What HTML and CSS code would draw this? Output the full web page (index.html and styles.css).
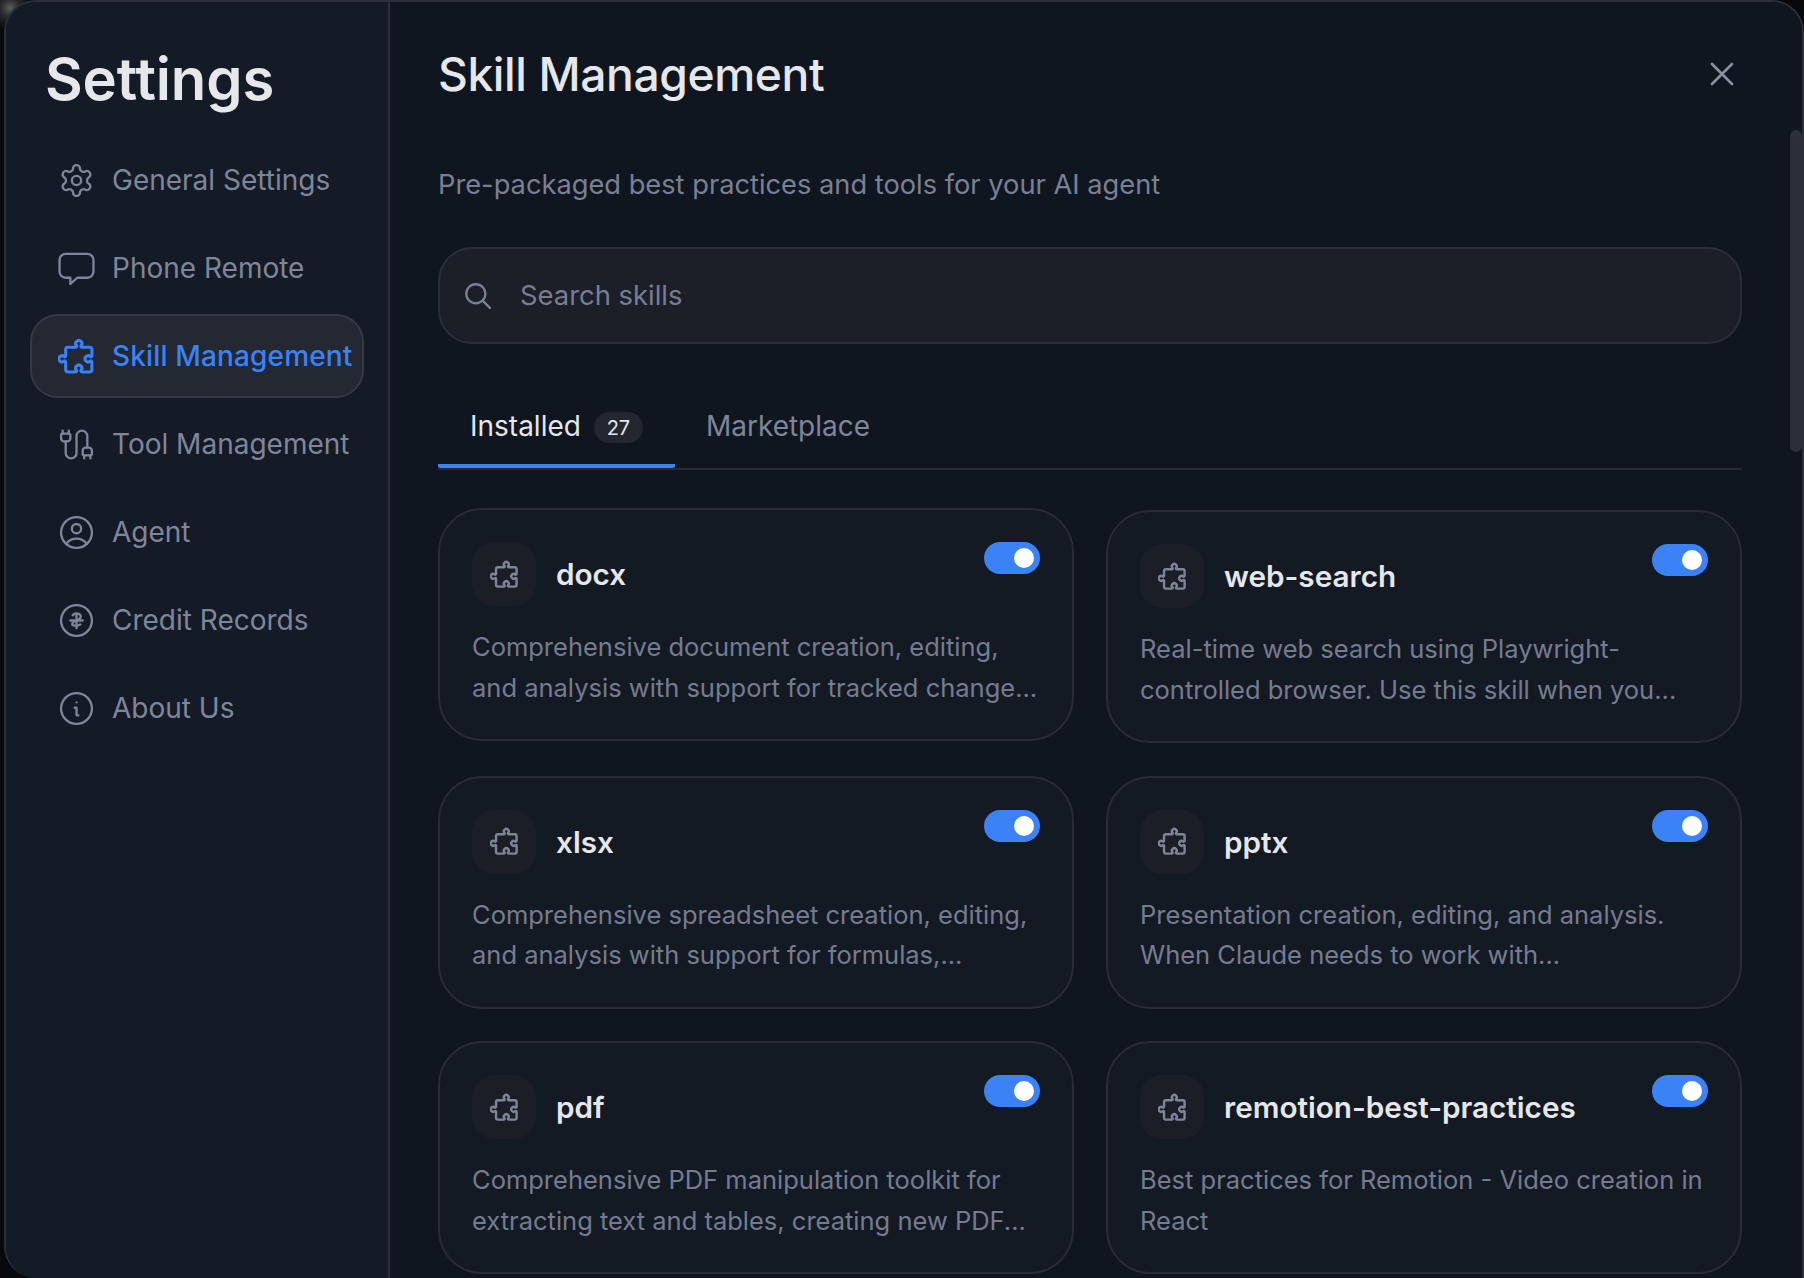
FILE: index.html
```html
<!DOCTYPE html>
<html lang="en">
<head>
<meta charset="utf-8">
<title>Settings</title>
<link rel="stylesheet" href="styles.css">
</head>
<body>
<svg class="defs" width="0" height="0" aria-hidden="true">
  <symbol id="puzzle" viewBox="0 0 24 24"><path d="M6.5 6H11.4a.7.7 0 0 0 .6-1.1a2 2 0 1 1 3 0a.7.7 0 0 0 .6 1.1H20.5a1.5 1.5 0 0 1 1.5 1.5V11.4a.7.7 0 0 1-1.1.6a2 2 0 1 0 0 3a.7.7 0 0 1 1.1.6V20.5a1.5 1.5 0 0 1-1.5 1.5H15.6a.7.7 0 0 1-.6-1.1a2 2 0 1 0-3 0a.7.7 0 0 1-.6 1.1H6.5a1.5 1.5 0 0 1-1.5-1.5V15.6a.7.7 0 0 0-1.1-.6a2 2 0 1 1 0-3a.7.7 0 0 0 1.1-.6V7.5A1.5 1.5 0 0 1 6.5 6z"/></symbol>
</svg>
<div class="window">
  <aside class="sidebar">
    <h1 class="sidebar-title">Settings</h1>
    <nav class="nav">
      <a class="nav-item"><svg class="nav-icon" viewBox="0 0 24 24"><path d="M12.22 2h-.44a2 2 0 0 0-2 2v.18a2 2 0 0 1-1 1.73l-.43.25a2 2 0 0 1-2 0l-.15-.08a2 2 0 0 0-2.73.73l-.22.38a2 2 0 0 0 .73 2.73l.15.1a2 2 0 0 1 1 1.72v.51a2 2 0 0 1-1 1.74l-.15.09a2 2 0 0 0-.73 2.73l.22.38a2 2 0 0 0 2.73.73l.15-.08a2 2 0 0 1 2 0l.43.25a2 2 0 0 1 1 1.73V20a2 2 0 0 0 2 2h.44a2 2 0 0 0 2-2v-.18a2 2 0 0 1 1-1.73l.43-.25a2 2 0 0 1 2 0l.15.08a2 2 0 0 0 2.73-.73l.22-.39a2 2 0 0 0-.73-2.73l-.15-.08a2 2 0 0 1-1-1.74v-.5a2 2 0 0 1 1-1.74l.15-.09a2 2 0 0 0 .73-2.73l-.22-.38a2 2 0 0 0-2.73-.73l-.15.08a2 2 0 0 1-2 0l-.43-.25a2 2 0 0 1-1-1.73V4a2 2 0 0 0-2-2z"/><circle cx="12" cy="12" r="3"/></svg><span>General Settings</span></a>
      <a class="nav-item"><svg class="nav-icon" viewBox="0 0 24 24"><path d="M5 2.500h14a4 4 0 0 1 4 4v7.500a4 4 0 0 1-4 4h-6.500l-4.500 4v-4H5a4 4 0 0 1-4-4V6.500a4 4 0 0 1 4-4z"/></svg><span>Phone Remote</span></a>
      <a class="nav-item active"><svg class="nav-icon"><use href="#puzzle"/></svg><span>Skill Management</span></a>
      <a class="nav-item"><svg class="nav-icon" viewBox="0 0 24 24"><path d="M17 19a1 1 0 0 1-1-1v-2a2 2 0 0 1 2-2h2a2 2 0 0 1 2 2v2a1 1 0 0 1-1 1z"/><path d="M17 21v-2"/><path d="M19 14V6.500a1 1 0 0 0-7 0v11a1 1 0 0 1-7 0V10"/><path d="M21 21v-2"/><path d="M3 5V3"/><path d="M4 10a2 2 0 0 1-2-2V6a1 1 0 0 1 1-1h4a1 1 0 0 1 1 1v2a2 2 0 0 1-2 2z"/><path d="M7 5V3"/></svg><span>Tool Management</span></a>
      <a class="nav-item"><svg class="nav-icon" viewBox="0 0 24 24"><circle cx="12" cy="12" r="10"/><circle cx="12" cy="9.500" r="3"/><path d="M5.300 19.400C6.800 17.200 9 16 12 16s5.200 1.200 6.700 3.400"/></svg><span>Agent</span></a>
      <a class="nav-item"><svg class="nav-icon" viewBox="0 0 24 24"><circle cx="12" cy="12" r="10"/><path d="M9.500 8.600c1-1.500 5-1.700 5.300.7.300 2.300-4.800 2.600-5.600 4.700-.5 1.500 3 1.700 5.300.6"/><path d="M8 12h8"/><path d="M12 7.500v9.500"/></svg><span>Credit Records</span></a>
      <a class="nav-item"><svg class="nav-icon" viewBox="0 0 24 24"><circle cx="12" cy="12" r="10"/><path d="M12 8h.01"/><path d="M10.800 11.500H12v4.200c0 .6.500 1 1.200.7"/></svg><span>About Us</span></a>
    </nav>
  </aside>
  <main class="main">
    <header class="main-head">
      <h2 class="main-title">Skill Management</h2>
      <svg class="close" viewBox="0 0 24 24"><path d="M2 2l20 20M22 2L2 22"/></svg>
    </header>
    <p class="subtitle">Pre-packaged best practices and tools for your AI agent</p>
    <div class="search">
      <svg class="search-icon" viewBox="0 0 24 24"><circle cx="10.500" cy="10.500" r="8.500"/><path d="M17 17l6 6"/></svg>
      <span class="search-text">Search skills</span>
    </div>
    <div class="tabs">
      <div class="tab current"><span>Installed</span><span class="badge">27</span></div>
      <div class="tab"><span>Marketplace</span></div>
    </div>
    <section class="grid">
      <article class="card">
        <div class="card-head"><div class="card-id"><div class="card-icon"><svg class="puzzle-sm"><use href="#puzzle"/></svg></div><h3>docx</h3></div><span class="toggle"></span></div>
        <p class="desc">Comprehensive document creation, editing, and analysis with support for tracked change...</p>
      </article>
      <article class="card shifted">
        <div class="card-head"><div class="card-id"><div class="card-icon"><svg class="puzzle-sm"><use href="#puzzle"/></svg></div><h3>web-search</h3></div><span class="toggle"></span></div>
        <p class="desc">Real-time web search using Playwright-controlled browser. Use this skill when you...</p>
      </article>
      <article class="card">
        <div class="card-head"><div class="card-id"><div class="card-icon"><svg class="puzzle-sm"><use href="#puzzle"/></svg></div><h3>xlsx</h3></div><span class="toggle"></span></div>
        <p class="desc">Comprehensive spreadsheet creation, editing, and analysis with support for formulas,...</p>
      </article>
      <article class="card">
        <div class="card-head"><div class="card-id"><div class="card-icon"><svg class="puzzle-sm"><use href="#puzzle"/></svg></div><h3>pptx</h3></div><span class="toggle"></span></div>
        <p class="desc">Presentation creation, editing, and analysis. When Claude needs to work with...</p>
      </article>
      <article class="card">
        <div class="card-head"><div class="card-id"><div class="card-icon"><svg class="puzzle-sm"><use href="#puzzle"/></svg></div><h3>pdf</h3></div><span class="toggle"></span></div>
        <p class="desc">Comprehensive PDF manipulation toolkit for extracting text and tables, creating new PDF...</p>
      </article>
      <article class="card">
        <div class="card-head"><div class="card-id"><div class="card-icon"><svg class="puzzle-sm"><use href="#puzzle"/></svg></div><h3>remotion-best-practices</h3></div><span class="toggle"></span></div>
        <p class="desc">Best practices for Remotion - Video creation in React</p>
      </article>
    </section>
    <div class="scrollbar"></div>
  </main>
</div>
</body>
</html>
```
FILE: styles.css
```css
* { box-sizing: border-box; }
html, body { height: 100%; }
body {
  margin: 0;
  background: radial-gradient(circle at 10px 8px, #5a5c60 0, #2a2b2e 9px, #08090c 22px);
  overflow: hidden;
  font-family: Inter, "Liberation Sans", sans-serif;
  color: #e5e7eb;
}
.defs { position: absolute; }
.window {
  height: 1278px;
  margin-left: 4px;
  display: flex;
  border: 2px solid #2a2f3a;
  border-bottom: 0;
  border-radius: 32px 32px 0 32px;
  overflow: hidden;
  background: #10161f;
}
.sidebar {
  width: 384px;
  flex: none;
  background: #151b26;
  border-right: 2px solid #2a2f3a;
  padding: 43px 24px 0 24px;
}
.sidebar-title {
  margin: 0 0 0 15px;
  font-size: 58px;
  line-height: 68px;
  font-weight: 600;
  letter-spacing: -0.1px;
  color: #e5e7eb;
}
.nav { margin-top: 25px; display: flex; flex-direction: column; gap: 4px; }
.nav-item {
  height: 84px;
  display: flex;
  align-items: center;
  gap: 17px;
  padding-left: 26px;
  border: 2px solid transparent;
  border-radius: 28px;
  font-size: 28px;
  font-weight: 400;
  color: #7f869a;
  white-space: nowrap;
}
.nav-item.active {
  color: #3b82f6;
  background: #232833;
  border-color: #343944;
  font-weight: 500;
  letter-spacing: 0.15px;
}
.nav-icon {
  width: 37px;
  height: 37px;
  flex: none;
  fill: none;
  stroke: currentColor;
  stroke-width: 1.5;
  stroke-linecap: round;
  stroke-linejoin: round;
}
.active .nav-icon { stroke-width: 2; }
.main {
  position: relative;
  flex: 1;
  min-width: 0;
  padding: 0 60px 0 48px;
  background: #10161f;
}
.main-head {
  display: flex;
  align-items: flex-start;
  justify-content: space-between;
  height: 163px;
  padding: 44px 8px 0 0;
}
.main-title {
  margin: 0;
  font-size: 46.2px;
  line-height: 56px;
  font-weight: 500;
  letter-spacing: -0.4px;
  color: #e5e7eb;
}
.close {
  width: 24px;
  height: 24px;
  margin-top: 16px;
  fill: none;
  stroke: #8b90a0;
  stroke-width: 2.6;
  stroke-linecap: round;
}
.subtitle {
  margin: 0;
  font-size: 27.25px;
  line-height: 40px;
  color: #7a8094;
}
.search {
  margin-top: 42px;
  height: 97px;
  display: flex;
  align-items: center;
  gap: 29px;
  padding-left: 24px;
  padding-bottom: 1px;
  background: #1c1f28;
  border: 2px solid #2a2e39;
  border-radius: 34px;
}
.search-icon {
  width: 27px;
  height: 27px;
  fill: none;
  stroke: #7b8297;
  stroke-width: 2;
  stroke-linecap: round;
}
.search-text { font-size: 27.4px; color: #787e92; }
.tabs {
  margin-top: 53px;
  height: 73px;
  display: flex;
  border-bottom: 2px solid #262a34;
}
.tab {
  height: 73px;
  padding: 0 32px;
  display: flex;
  align-items: flex-start;
  gap: 13px;
  font-size: 28px;
  line-height: 58px;
  color: #7f869a;
}
.tab + .tab { padding-left: 31px; }
.tab.current {
  color: #e5e7eb;
  border-bottom: 4px solid #3b82f6;
  border-radius: 2px;
  height: 71px;
}
.badge {
  margin-top: 15px;
  height: 31px;
  min-width: 49px;
  border-radius: 16px;
  background: #23272f;
  font-size: 20px;
  line-height: 33px;
  text-align: center;
  color: #e5e7eb;
}
.grid {
  margin-top: 38px;
  display: grid;
  grid-template-columns: 636px 636px;
  grid-template-rows: 234px 232px 232px;
  column-gap: 32px;
  row-gap: 33.5px;
  align-items: start;
}
.card {
  height: 233px;
  padding: 32px;
  background: #141a24;
  border: 2px solid #282c37;
  border-radius: 44px;
}
.card.shifted { margin-top: 2px; }
.card-head { display: flex; justify-content: space-between; align-items: flex-start; }
.card-id { display: flex; align-items: center; gap: 20px; }
.card-icon {
  width: 64px;
  height: 64px;
  border-radius: 22px;
  background: #1c1e27;
  display: flex;
  align-items: center;
  justify-content: center;
  color: #7f8599;
}
.puzzle-sm {
  width: 29px;
  height: 29px;
  fill: none;
  stroke: currentColor;
  stroke-width: 2;
  stroke-linejoin: round;
}
.card h3 {
  margin: 0;
  font-size: 29.7px;
  font-weight: 600;
  color: #e5e7eb;
}
.toggle {
  position: relative;
  width: 56px;
  height: 32px;
  flex: none;
  border-radius: 16px;
  background: #3b82f6;
}
.toggle::after {
  content: "";
  position: absolute;
  right: 6px;
  top: 6px;
  width: 20px;
  height: 20px;
  border-radius: 50%;
  background: #ffffff;
}
.desc {
  margin: 21px 0 0;
  font-size: 25.5px;
  line-height: 40.5px;
  color: #767c90;
}
.scrollbar {
  position: absolute;
  right: 0;
  top: 128px;
  width: 12px;
  height: 322px;
  border-radius: 6px;
  background: #2c2f39;
}
```
